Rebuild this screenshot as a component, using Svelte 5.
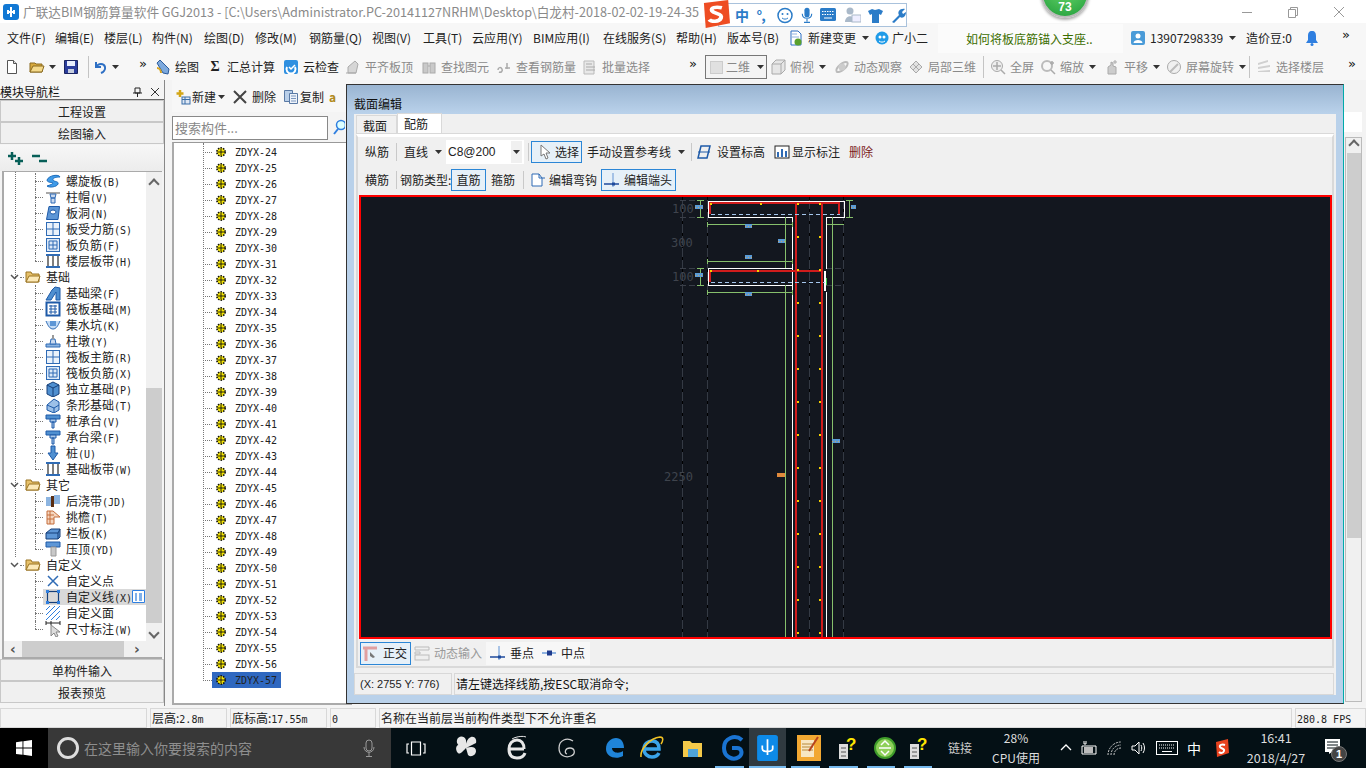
<script>
const ic = {
  new: '<path d="M3.500 1.500h6l3 3v10h-9z" fill="#fff" stroke="#555"/><path d="M9.500 1.500v3h3" fill="#ddd" stroke="#555"/>',
  open: '<path d="M1 13V4h5l1 1h6v8z" fill="#d8a93d" stroke="#8a6a20"/><path d="M1 13l3-6h11l-2 6z" fill="#f4d98a" stroke="#8a6a20"/>',
  save: '<path d="M1.500 1.500h13v13h-13z" fill="#2b3d9c" stroke="#1b2560"/><path d="M4 2h8v5H4z" fill="#e8eefc"/><path d="M5 10h6v4H5z" fill="#c7cfdf"/>',
  undo: '<path d="M4 3v5h5M4.500 8C6 4 12 4 13 8c.6 2.500-1.500 5-4 6" fill="none" stroke="#2d6fc4" stroke-width="2"/>',
  draw: '<path d="M2 4l3-3 9 9-1 5-5-1z" fill="#7da9dd" stroke="#2c5c9c"/><path d="M2 9c2 0 4 2 4 5" fill="none" stroke="#d9a520" stroke-width="2"/>',
  cloud: '<rect x="1" y="1" width="14" height="14" rx="2" fill="#2e8fe0"/><path d="M4 8a4.500 4.500 0 1 0 8 0" fill="none" stroke="#fff" stroke-width="2"/><path d="M6 8l2 2 4-4" fill="none" stroke="#fff" stroke-width="1.500"/>',
  g1: '<path d="M3 14V8l7-6 3 3-2 9z" fill="#d6d6d6" stroke="#aaa"/><path d="M1 14h10" stroke="#aaa"/>',
  bino: '<rect x="2" y="4" width="5" height="10" fill="#c9c9c9" stroke="#aaa"/><rect x="9" y="4" width="5" height="10" fill="#c9c9c9" stroke="#aaa"/><path d="M7 7h2" stroke="#aaa"/>',
  chain: '<path d="M2 11c0-3 3-3 4-1s-1 4-3 3M9 9h5M11 4v6" fill="none" stroke="#aaa" stroke-width="1.500"/>',
  list: '<path d="M2 2h10v13H2z" fill="#e8e8e8" stroke="#bbb"/><path d="M4 5h6M4 8h9M4 11h9" stroke="#aaa"/>',
  cube: '<path d="M2 5l4-4h9v10l-4 4H2z" fill="#e6e6e6" stroke="#aaa"/><path d="M2 5h9v10M11 5l4-4" fill="none" stroke="#aaa"/>',
  orbit: '<ellipse cx="8" cy="8" rx="7" ry="3" transform="rotate(-40 8 8)" fill="none" stroke="#bbb" stroke-width="2"/><circle cx="8" cy="8" r="3.500" fill="#ccc"/>',
  boxes: '<path d="M2 8l6-6 6 6-6 6z" fill="#e2e2e2" stroke="#aaa"/><path d="M5 5l6 6M11 5l-6 6" stroke="#aaa"/>',
  zoomf: '<circle cx="7" cy="7" r="5.500" fill="#eee" stroke="#aaa"/><path d="M7 3v8M3 7h8M11 11l4 4" stroke="#aaa" stroke-width="1.500"/>',
  zoom: '<circle cx="7" cy="7" r="5" fill="none" stroke="#bbb" stroke-width="2"/><path d="M11 11l4 4M12 2v4M10 4h4" stroke="#aaa" stroke-width="1.500"/>',
  pan: '<path d="M4 15V8l3-2V3l2 1v3l3 1v7z" fill="#ccc" stroke="#aaa"/><path d="M11 1v4M9 3h4" stroke="#aaa"/>',
  rot: '<circle cx="8" cy="8" r="6.500" fill="#f0f0f0" stroke="#aaa"/><path d="M4 13l8-8" stroke="#bbb" stroke-width="2"/>',
  floors: '<path d="M2 4l10-3v2L2 6zM2 8l12-2v2L2 10zM2 12l12-1v2H2z" fill="#d0d0d0"/>',
  doc: '<path d="M3 1h7l3 3v11H3z" fill="#fff" stroke="#2d6fc4"/><path d="M4 4h5M4 7h7" stroke="#8fb3e0"/><circle cx="10" cy="12" r="3.500" fill="#5aa02c"/>',
  mascot: '<circle cx="8" cy="8" r="6.500" fill="#1f9be8"/><circle cx="6" cy="7" r="1.500" fill="#fff"/><circle cx="10" cy="7" r="1.500" fill="#fff"/><path d="M5 11c2 1.500 4 1.500 6 0" fill="none" stroke="#fff"/>',
  user: '<rect x="1" y="1" width="14" height="14" rx="2" fill="#4a9bd8"/><circle cx="8" cy="6" r="2.500" fill="#fff"/><path d="M3.500 13c0-4 9-4 9 0z" fill="#fff"/>',
  bell: '<path d="M8 1c3 0 4 2 4 5v4l2 3H2l2-3V6c0-3 1-5 4-5z" fill="#2f7fe0"/><circle cx="8" cy="14.500" r="1.500" fill="#2f7fe0"/>',
  addnew: '<path d="M5 1v7M1.500 4.500h7" stroke="#d3a617" stroke-width="2.500"/><rect x="7" y="8" width="8" height="7" fill="#dfe8f5" stroke="#3a6ea8"/><path d="M7 10.500h8M10 8v7" stroke="#3a6ea8"/>',
  copy: '<path d="M1.500 1.500h8v11h-8z" fill="#b9cfe9" stroke="#5a7aa5"/><path d="M6.500 4.500h8v10h-8z" fill="#eef3fa" stroke="#5a7aa5"/><path d="M8 7h5M8 9.500h5M8 12h5" stroke="#7a96bd"/>',
  spiral: '<path d="M2 7c2-5 12-6 13-3-4 0-8 1-7 3s6 1 5 4-9 4-11 2c3-1 6-2 6-3S2 10 2 7z" fill="#3f9be8" stroke="#1e6dbc"/>',
  cap: '<path d="M1 3h14v2H1z" fill="#a8a8a8"/><path d="M5 5h6l-1 4H6zM6 9h4v5H6z" fill="#c9d9ef" stroke="#2f6bb5"/>',
  hole: '<path d="M4 1.500h10.500L13 14.500H1.500z" fill="#5d96d6" stroke="#1e5aa8"/><ellipse cx="8" cy="7" rx="3" ry="2" fill="#fff" stroke="#1e5aa8"/>',
  grid: '<rect x="1.500" y="1.500" width="13" height="13" fill="#eaf2fb" stroke="#2f6bb5"/><path d="M1.500 8h13M8 1.500v13" stroke="#2f6bb5"/>',
  grid2: '<rect x="1.500" y="1.500" width="13" height="13" fill="#dce9f8" stroke="#2f6bb5"/><path d="M4 8h8M8 4v8M4 4h8v8H4z" fill="none" stroke="#2f6bb5"/>',
  band: '<path d="M1 2h14M1 14h14" stroke="#2f6bb5" stroke-width="2"/><path d="M3 3v10M8 3v10M13 3v10" stroke="#555" stroke-width="1.500"/>',
  beam: '<path d="M1 15l6-10 3-3 5 1v12h-4V7L6 15z" fill="#4f8fd0" stroke="#1e5aa8"/>',
  raft: '<rect x="1.500" y="1.500" width="13" height="13" fill="#fff" stroke="#1e5aa8" stroke-width="2"/><path d="M4 5h8M4 8h8M4 11h8M6 4v9M10 4v9" stroke="#1e5aa8"/>',
  pit: '<path d="M1 4c2 5 4 8 7 8s5-3 7-8" fill="#c4dcf6" stroke="#2f6bb5"/><path d="M5 4h6v5H5z" fill="#5d96d6"/>',
  pier: '<path d="M1 14h14v-3H1z" fill="#8cb4e0" stroke="#2f6bb5"/><path d="M5 11l1-5h4l1 5z" fill="#c9d9ef" stroke="#2f6bb5"/><path d="M7 2h2v4H7z" fill="#999"/>',
  iso: '<path d="M8 1l6 3v9l-6 3-6-3V4z" fill="#4f8fd0" stroke="#163f78"/><path d="M2 4l6 3 6-3M8 7v9" fill="none" stroke="#163f78"/>',
  strip: '<path d="M2 8l7-6 5 3v8l-5 3-7-3z" fill="#9cc0e8" stroke="#1e5aa8"/><path d="M2 8l7 3v5M9 11l5-3" fill="none" stroke="#1e5aa8"/>',
  pile: '<path d="M1 2h14v4H1z" fill="#4f8fd0" stroke="#1e5aa8"/><path d="M5 6h6v3H5zM7 9h2v6H7z" fill="#aac8ea" stroke="#1e5aa8"/>',
  arrow: '<path d="M6 1h4v7h3l-5 7-5-7h3z" fill="#4f8fd0" stroke="#1e5aa8"/>',
  pour: '<rect x="1" y="4" width="6" height="9" fill="#8cb4e0"/><rect x="6" y="3" width="3" height="11" fill="#5a2e12"/><rect x="9" y="2" width="6" height="9" fill="#8cb4e0"/>',
  eave: '<path d="M2 2h6l7 6H9v7H2z" fill="#f5d6bf" stroke="#c46c3a"/><path d="M2 6h7M2 10h7M5 2v13" stroke="#c46c3a"/>',
  rail: '<path d="M1 8l5-4h9v8l-2 2H1z" fill="#5d96d6" stroke="#163f78"/><path d="M1 8h12v6M13 8l2-4" fill="none" stroke="#163f78"/>',
  press: '<path d="M1 1h14v5H1z" fill="#5d96d6" stroke="#1e5aa8"/><path d="M6 6h5v9H6z" fill="#c8c8c8" stroke="#999"/>',
  xpt: '<path d="M3 3l10 10M13 3L3 13" stroke="#2f6bb5" stroke-width="1.500"/>',
  cline: '<rect x="2.500" y="2.500" width="11" height="11" fill="none" stroke="#163f78" stroke-width="1.200"/><g fill="#2f7fe0"><rect x="1" y="1" width="3" height="3"/><rect x="12" y="1" width="3" height="3"/><rect x="1" y="12" width="3" height="3"/><rect x="12" y="12" width="3" height="3"/></g>',
  hatch: '<path d="M1 5l4-4M1 10l9-9M1 15L15 1M6 15l9-9M11 15l4-4" stroke="#2f7fe0"/>',
  dim: '<path d="M1 2h14M1 0v4M6 0v4M15 0v4" stroke="#222"/><path d="M6 4v11l3-3 2 4 2-1-2-4h4z" fill="#ddd" stroke="#888"/>',
  folder: '<path d="M1 13V3h5l1 2h7v8z" fill="#e6c06a" stroke="#9a7422"/><path d="M1 13l3-6h11l-2 6z" fill="#fce9b7" stroke="#9a7422"/>',
  gear: '<circle cx="8" cy="8" r="5.500" fill="#f6e600" stroke="#111" stroke-dasharray="2 1.500" stroke-width="2.200"/><path d="M4 8h8M8 4v8" stroke="#111" stroke-width="1.200"/>',
  select: '<path d="M4 1v11l3-2 2 5 2-1-2-5h4z" fill="#fff" stroke="#777"/>',
  elev: '<path d="M4 2h9l-3 12H1z" fill="none" stroke="#1e5aa8" stroke-width="1.500"/><path d="M1 8h12" stroke="#1e5aa8"/>',
  mark: '<rect x="1" y="2" width="14" height="12" fill="#fff" stroke="#222"/><path d="M4 13V8M8 13V5M12 13V7" stroke="#2f6bb5" stroke-width="2"/>',
  hook: '<path d="M2 2h7l3 4v8H2z" fill="#fff" stroke="#2f6bb5"/><path d="M12 6h3M9 2v4h3" fill="none" stroke="#2f6bb5"/>',
  end: '<path d="M0 12h15" stroke="#1e4a9c" stroke-width="1.500"/><path d="M9 1v14" stroke="#8fb3e0" stroke-width="1.500"/><rect x="8" y="10.500" width="3" height="3" fill="#1e4a9c"/>',
  mid: '<path d="M1 8h14" stroke="#8fb3e0" stroke-width="2"/><rect x="6" y="5.500" width="5" height="5" fill="#1e3a8c"/>',
  ortho: '<path d="M1 3h14M4 3v13" stroke="#e0a0a0" stroke-width="3"/><path d="M8 7l5 5-2 1-3-2z" fill="#777"/>',
  dyn: '<path d="M1 2h14v3H1zM1 7h5v2H1z" fill="none" stroke="#bbb"/><rect x="1" y="10" width="14" height="5" fill="#eee" stroke="#bbb"/>'
};
const menu = [['文件(F)',48],['编辑(E)',49],['楼层(L)',48],['构件(N)',52],['绘图(D)',51],['修改(M)',54],['钢筋量(Q)',63],['视图(V)',51],['工具(T)',49],['云应用(Y)',61],['BIM应用(I)',70],['在线服务(S)',73],['帮助(H)',51],['版本号(B)',60]];
const tb1 = [
  {i:'new',w:25},{i:'open',w:18},{a:1,w:16},{i:'save',w:22},{s:1,w:7},{i:'undo',w:18},{a:1,w:29},{m:1,w:16},
  {i:'draw',t:'绘图',w:52},{sig:1,t:'汇总计算',w:76},{i:'cloud',t:'云检查',w:62},{i:'g1',t:'平齐板顶',w:76,g:1},{i:'bino',t:'查找图元',w:75,g:1},{i:'chain',t:'查看钢筋量',w:86,g:1},{i:'list',t:'批量选择',w:107,g:1},{m:1,w:16}
];
const tb2 = [
  {i:'cube',t:'俯视',w:64,g:1,ar:1},{i:'orbit',t:'动态观察',w:74,g:1},{i:'boxes',t:'局部三维',w:72,g:1},{s:1,w:10},
  {i:'zoomf',t:'全屏',w:50,g:1},{i:'zoom',t:'缩放',w:64,g:1,ar:1},{i:'pan',t:'平移',w:62,g:1,ar:1},{i:'rot',t:'屏幕旋转',w:80,g:1,ar:1},{s:1,w:10},{i:'floors',t:'选择楼层',w:92,g:1},{m:1,w:16}
];
const tree = [
  ['spiral','螺旋板','(B)'],['cap','柱帽','(V)'],['hole','板洞','(N)'],['grid','板受力筋','(S)'],['grid2','板负筋','(F)'],['band','楼层板带','(H)',0,2],
  ['folder','基础','',1],['beam','基础梁','(F)'],['raft','筏板基础','(M)'],['pit','集水坑','(K)'],['pier','柱墩','(Y)'],['grid','筏板主筋','(R)'],['grid2','筏板负筋','(X)'],['iso','独立基础','(P)'],['strip','条形基础','(T)'],['pile','桩承台','(V)'],['pile','承台梁','(F)'],['arrow','桩','(U)'],['band','基础板带','(W)',0,2],
  ['folder','其它','',1],['pour','后浇带','(JD)'],['eave','挑檐','(T)'],['rail','栏板','(K)'],['press','压顶','(YD)',0,2],
  ['folder','自定义','',1],['xpt','自定义点',''],['cline','自定义线','(X)',0,3],['hatch','自定义面',''],['dim','尺寸标注','(W)',0,2]
];
const list = Array.from({length:34},(_,i)=>'ZDYX-'+(i+24));
const marks = [];
for(let y=204;y<=633;y+=33){marks.push([797,y]);marks.push([819,y]);}
const marks2 = [[710,204],[760,204],[710,271],[757,271]];
const blues = [[695,207,8],[851,207,5],[778,241,7],[745,257,7],[745,226,7],[695,275,8],[745,294,7],[832,441,8]];
</script>

{#snippet icon(name, size = 16)}
  <svg class="ic" width={size} height={size} viewBox="0 0 16 16">{@html ic[name]}</svg>
{/snippet}

{#snippet caret()}
  <svg class="caret" width="7" height="4" viewBox="0 0 7 4"><path d="M0 0h7L3.500 4z" fill="#333"/></svg>
{/snippet}

{#snippet toolbar(items)}
  {#each items as it}
    <span class="cell" class:gray={it.g} style:width="{it.w}px">
      {#if it.s}<span class="sep"></span>
      {:else if it.a}<span class="capwrap">{@render caret()}</span>
      {:else if it.m}<span class="more">»</span>
      {:else if it.sig}<b class="sigma">Σ</b><span class="lab">{it.t}</span>
      {:else}
        {@render icon(it.i)}
        {#if it.t}<span class="lab">{it.t}</span>{/if}
        {#if it.ar}<span class="arr">{@render caret()}</span>{/if}
      {/if}
    </span>
  {/each}
{/snippet}

<div class="screen">
  <header class="title">
    <svg class="appicon" width="16" height="16" viewBox="0 0 16 16"><rect width="16" height="16" rx="3" fill="#1178d4"/><path d="M8 3v10M4 8h8M5 6v4M11 6v4" fill="none" stroke="#fff" stroke-width="2"/></svg>
    <span class="titletext">广联达BIM钢筋算量软件 GGJ2013 - [C:\Users\Administrator.PC-20141127NRHM\Desktop\白龙村-2018-02-02-19-24-35</span>
    <div class="winbtns">
      <span class="wb"><svg width="12" height="12"><path d="M1 6.500h10" stroke="#999"/></svg></span>
      <span class="wb"><svg width="12" height="12"><path d="M1.500 3.500h7v8h-7zM3.500 3V1.500h7v8H9" fill="none" stroke="#999"/></svg></span>
      <span class="wb"><svg width="12" height="12"><path d="M1 1l10 10M11 1L1 11" stroke="#999"/></svg></span>
    </div>
  </header>

  <nav class="menubar">
    {#each menu as m}<span class="mi" style:width="{m[1]}px">{m[0]}</span>{/each}
    <span class="mi wide87">{@render icon('doc')}<span class="lab2">新建变更</span><span class="arr2">{@render caret()}</span></span>
    <span class="mi wide64">{@render icon('mascot')}<span class="lab1">广小二</span></span>
    <span class="notice">如何将板底筋锚入支座..</span>
    <span class="mi acct">{@render icon('user')}<span class="lab2">13907298339</span><span class="arr3">{@render caret()}</span></span>
    <span class="mi bean">造价豆:0</span>
    <span class="mi bellc">{@render icon('bell')}</span>
    <span class="more">»</span>
  </nav>

  <div class="toolbar">
    {@render toolbar(tb1)}
    <span class="combo"><span class="sq"></span><span class="gtxt">二维</span>{@render caret()}</span>
    <span class="cellgap"></span>
    {@render toolbar(tb2)}
  </div>

  <main class="work">
    <aside class="nav">
      <div class="navtitle"><span>模块导航栏</span><span class="navctl"><svg width="9" height="10"><path d="M2 1h5v5H2zM0 6h9M4.500 6v4" fill="none" stroke="#222"/></svg><svg width="8" height="8"><path d="M0 0l8 8M8 0L0 8" stroke="#333"/></svg></span></div>
      <div class="navbtn">工程设置</div>
      <div class="navbtn">绘图输入</div>
      <div class="treetools">
        <svg width="17" height="15" viewBox="0 0 17 15"><path d="M5 1v8M1 5h8M12 6v8M8 10h8" stroke="#075f58" stroke-width="2.500"/></svg>
        <svg width="17" height="15" viewBox="0 0 17 15"><path d="M1 5h8M8 10h8" stroke="#075f58" stroke-width="2.500"/></svg>
      </div>
      <div class="treebox">
        <div class="treeview">
          <div class="guide g1"></div>
          {#each tree as t}
            <div class="node" class:cat={t[3]} class:sel={t[4]===3}>
              {#if t[3]}
                <svg class="chev" width="9" height="6"><path d="M1 1l3.500 3.500L8 1" fill="none" stroke="#555" stroke-width="1.500"/></svg><span class="dots"></span>
              {:else}
                <span class="stem" class:last={t[4]===2}></span>
              {/if}
              {@render icon(t[0])}
              <span class="nlabel">{t[1]}<span class="mono">{t[2]}</span></span>
              {#if t[4]===3}<span class="colbtn"><svg width="13" height="13" viewBox="0 0 13 13"><path d="M.500.500h12v12H.500z" fill="#fff" stroke="#2f7fe0"/><path d="M3 3h2v8H3zM7 3h3v8H7z" fill="#7fb0ea"/></svg></span>{/if}
            </div>
          {/each}
        </div>
        <div class="vbar"><span class="tip up"></span><span class="vtrack"><span class="vthumb"></span></span><span class="tip down"></span></div>
        <div class="hbar"><span class="htip">‹</span><span class="hthumb"></span><span class="htip">›</span></div>
      </div>
      <div class="navbtn">单构件输入</div>
      <div class="navbtn">报表预览</div>
    </aside>

    <section class="listpanel">
      <div class="ltools">
        {@render icon('addnew')}<span class="ll">新建</span>{@render caret()}
        <svg class="xmark" width="14" height="14" viewBox="0 0 14 14"><path d="M1 1l12 12M13 1L1 13" stroke="#444" stroke-width="2"/></svg><span class="ll2">删除</span>
        <span class="cpy">{@render icon('copy')}</span><span class="ll">复制</span>
        <span class="peek">a</span>
      </div>
      <div class="searchrow"><span class="search">搜索构件...</span>
        <svg class="mag" width="12" height="16" viewBox="0 0 12 16"><circle cx="8" cy="6" r="4.500" fill="#dff" stroke="#2f7fe0" stroke-width="1.500"/><path d="M5 10l-4 5" stroke="#2f7fe0" stroke-width="2"/></svg>
      </div>
      <div class="listbox">
        <div class="guide g2"></div>
        {#each list as name, i}
          <div class="lrow"><span class="stem2"></span><span class="lsel" class:active={i===33}>{@render icon('gear',12)}<span class="lname">{name}</span></span></div>
        {/each}
      </div>
    </section>

    <aside class="rightcol">
      <div class="rwhite"></div>
      <div class="rbar"><span class="tip up"></span><span class="rthumb"></span></div>
    </aside>

    <div class="dialog">
      <div class="dtitle">截面编辑</div>
      <div class="dbody">
        <div class="tabs"><span class="tab">截面</span><span class="tab on">配筋</span></div>
        <div class="tabpanel">
          <div class="row r1">
            <span class="rl w38">纵筋</span><span class="vsep"></span>
            <span class="rl pl9">直线</span><span class="c1">{@render caret()}</span>
            <span class="rate">C8@200<span class="ratearrow">{@render caret()}</span></span><span class="vsep m5"></span>
            <span class="btn on w51">{@render icon('select')}<span class="bt">选择</span></span>
            <span class="rl wm">手动设置参考线</span><span class="c2">{@render caret()}</span><span class="vsep m6"></span>
            {@render icon('elev')}<span class="rl w4">设置标高</span>
            {@render icon('mark')}<span class="rl w4b">显示标注</span>
            <span class="del">删除</span>
          </div>
          <div class="row r2">
            <span class="rl w38">横筋</span><span class="vsep"></span>
            <span class="rl tp">钢筋类型:</span>
            <span class="btn on w34">直筋</span>
            <span class="rl ml5">箍筋</span><span class="vsep m7"></span>
            {@render icon('hook')}<span class="rl ml4">编辑弯钩</span>
            <span class="btn on w75">{@render icon('end')}<span class="bt2">编辑端头</span></span>
          </div>
          <div class="canvas">
            <svg width="969" height="440" viewBox="361 197 969 440" shape-rendering="crispEdges">
              <g stroke="#343a44" stroke-width="1">
                <path d="M682.500 197V637M707.500 197V637M809.500 197V637M843.500 197V637"/>
              </g>
              <g stroke="#000" stroke-width="1" stroke-dasharray="3 9">
                <path d="M682.500 197V637M707.500 197V637M809.500 197V637M843.500 197V637"/>
              </g>
              <g stroke="#3a3f49" stroke-dasharray="6 3"><path d="M680 200.500H707M680 217.500H707M680 268.500H707M680 285.500H707M826 268.500H844M826 285.500H844"/></g>
              <g fill="none" stroke="#fff" stroke-width="1">
                <path d="M792.500 637V268.500H708V285.500H792.500M792.500 268.500V217.500H708V201H844V217.500H826.500V269M826.500 292V637"/>
                <path d="M825 271V291" stroke-width="2"/>
              </g>
              <g fill="none" stroke="#86c06c" stroke-width="1">
                <path d="M707 224.500H793M827 224.500H844M707 261.500H793M707 292.500H793"/>
                <path d="M785.500 217V268M785.500 285V637M832.500 217V637"/>
                <path d="M700.500 200V217M849.500 200V217M700.500 268V285"/>
                <path d="M697 200h7M697 217h7M846 200h7M846 217h7M697 268h7M697 285h7"/>
                <path d="M707.500 222v5M792.500 222v5M707.500 259v5M792.500 259v5M707.500 290v5M792.500 290v5"/>
              </g>
              <g fill="none" stroke="#d01c1c" stroke-width="2">
                <path d="M710 214V203H839V214"/>
                <path d="M710 282V271H822"/>
                <path d="M796 203V637M822 203V637"/>
              </g>
              <g fill="none" stroke="#a5c6ec" stroke-dasharray="4 3"><path d="M711 214.500H840M711 282.500H825"/></g>
              <path d="M826 278v7" stroke="#3fd04a"/>
              {#each marks as m}<rect x={m[0]} y={m[1]-1} width="2" height="2" fill="#f4d000"/>{/each}
              {#each marks2 as m}<rect x={m[0]} y={m[1]-1} width="2" height="2" fill="#f4d000"/>{/each}
              {#each blues as b}
                <rect x={b[0]} y={b[1]-2} width={b[2]} height="4" fill="#5b9bd5"/>
                <path d="M{b[0]} {b[1]+.5}h{b[2]}" stroke="#c9a36a" stroke-dasharray="1 2"/>
              {/each}
              <rect x="777" y="473" width="8" height="4" fill="#e08a3c"/>
              <g class="dimtxt" fill="#3f444d" shape-rendering="auto">
                <text x="672" y="213">100</text><text x="671" y="247">300</text><text x="672" y="281">100</text><text x="664" y="481">2250</text>
              </g>
            </svg>
          </div>
          <div class="row r3">
            <span class="btn on w51b">{@render icon('ortho')}<span class="bt5">正交</span></span>
            <span class="rl gray ml3">{@render icon('dyn')}<span class="bt4">动态输入</span></span>
            <span class="grp">{@render icon('end')}<span class="bt4">垂点</span><span class="gap7"></span>{@render icon('mid')}<span class="bt4">中点</span></span>
          </div>
        </div>
        <div class="dstatus">
          <span class="coord">(X: 2755 Y: 776)</span>
          <span class="msg">请左键选择线筋,按ESC取消命令;</span>
        </div>
      </div>
    </div>
  </main>

  <div class="statusbar">
    <span class="sc s1"></span>
    <span class="sc s2">层高:<span class="mono">2.8m</span></span>
    <span class="sc s3">底标高:<span class="mono">17.55m</span></span>
    <span class="sc s4"><span class="mono">0</span></span>
    <span class="sc s5">名称在当前层当前构件类型下不允许重名</span>
    <span class="sc s6"><span class="mono">280.8 FPS</span></span>
  </div>

  <footer class="taskbar">
    <span class="start"><svg width="16" height="16" viewBox="0 0 16 16"><path d="M0 2.200l6.500-.9v6.300H0zM7.400 1.200L16 0v7.600H7.400zM0 8.500h6.500v6.300L0 14zM7.400 8.500H16V16l-8.600-1.200z" fill="#fff"/></svg></span>
    <span class="tsearch">
      <span class="ring"></span><span class="stext">在这里输入你要搜索的内容</span>
      <svg class="micic" width="12" height="19" viewBox="0 0 12 19"><rect x="3" y="1" width="6" height="11" rx="3" fill="none" stroke="#999"/><path d="M1 8c0 7 10 7 10 0M6 13v4M3 17.500h6" fill="none" stroke="#999"/></svg>
    </span>
    <span class="tapps">
      <span class="ti w50"><svg width="20" height="15" viewBox="0 0 20 15"><path d="M5.500 1h9v13h-9zM3 3H1v9h2M17 3h2v9h-2" fill="none" stroke="#fff" stroke-width="1.200"/></svg></span>
      <span class="ti w50"><svg width="22" height="26" viewBox="0 0 22 26"><path d="M11 13C4 12 1 9 2 5s7-5 9 0zM11 13c6-2 10-1 10 3s-5 7-8 4zM11 13c-3 3-6 7-8 5S0 12 3 10zM11 13c-1-3 1-10 5-11s6 3 5 6z" fill="#e7e7e7"/></svg></span>
      <span class="ti w52"><svg width="22" height="26" viewBox="0 0 22 26"><path d="M2 14h16M18 14c0-6-3-9-7-9S3 8 3 14s3 9 8 9 7-2 8-5" fill="none" stroke="#e7e7e7" stroke-width="3"/><path d="M6 4c5-3 12-3 14-2" fill="none" stroke="#e7e7e7"/></svg></span>
      <span class="ti w48"><svg width="20" height="22" viewBox="0 0 20 22"><path d="M16 4C10 0 2 3 2 11s7 10 12 8 4-8-1-8-6 5-3 6" fill="none" stroke="#cfcfcf" stroke-width="1.300"/></svg></span>
      <span class="ti w48"><svg width="20" height="22" viewBox="0 0 20 22"><path d="M1 12C1 5 6 1 11 1c5 0 8 4 8 10H7c0 5 7 6 11 3v5c-7 4-17 1-17-7z" fill="#1f84d8"/></svg></span>
      <span class="ti w26"><svg width="24" height="26" viewBox="0 0 24 26"><path d="M3 14h16c0-6-3-8-7-8s-8 3-8 8 4 8 8 8 6-2 7-4" fill="none" stroke="#3aa3e8" stroke-width="3.500"/><path d="M1 22C0 14 10 3 20 2c4 0 3 4 1 7" fill="none" stroke="#f2c224" stroke-width="1.500"/></svg></span>
      <span class="ti w36 ml10"><svg width="20" height="18" viewBox="0 0 20 18"><path d="M0 2h7l2 2h10v14H0z" fill="#f4c94a"/><path d="M5 10h10v8H5z" fill="#4fa3d8"/></svg></span>
      <span class="ti w38"><svg width="23" height="26" viewBox="0 0 23 26"><path d="M20 5C13-1 2 3 2 13c0 9 9 13 15 9 4-3 3-9-2-9H10" fill="none" stroke="#1a74d2" stroke-width="4"/></svg></span>
      <span class="ti w37 act"><svg width="23" height="26" viewBox="0 0 24 30"><rect width="24" height="30" rx="3" fill="#0d8ae8"/><path d="M12 5v18M6 12v4c0 3 3 3 6 3s6 0 6-3v-4" fill="none" stroke="#fff" stroke-width="2"/></svg></span>
      <span class="ti w38"><svg width="24" height="26" viewBox="0 0 24 26"><rect x="0" y="0" width="24" height="26" fill="#f2a832"/><rect x="4" y="5" width="13" height="17" fill="#f7e7c4"/><path d="M5 9h11M5 12h11M5 15h11" stroke="#b78a3a"/><path d="M21 2L12 16" stroke="#b6431e" stroke-width="2"/></svg></span>
      <span class="ti w38"><svg width="20" height="26" viewBox="0 0 20 26"><rect x="2" y="9" width="9" height="15" fill="#ddd"/><path d="M4 13h5M4 17h5M4 21h5" stroke="#555"/><text x="9" y="15" class="q">?</text></svg></span>
      <span class="ti w38"><svg width="22" height="28" viewBox="0 0 22 28"><circle cx="11" cy="14" r="10" fill="#8fd05a" stroke="#3f9c2a" stroke-width="2"/><path d="M5 14h12M7 11l4-4 4 4M7 17l4 4 4-4" fill="none" stroke="#fff" stroke-width="1.500"/></svg></span>
      <span class="ti w36"><svg width="20" height="26" viewBox="0 0 20 26"><rect x="2" y="9" width="9" height="15" fill="#ddd"/><path d="M4 13h5M4 17h5M4 21h5" stroke="#555"/><text x="9" y="15" class="q">?</text></svg></span>
    </span>
    <span class="tlink">链接</span>
    <span class="tcpu"><span>28%</span><span>CPU使用</span></span>
    <span class="ttray">
      <svg width="12" height="12" viewBox="0 0 12 12"><path d="M1 8l5-5 5 5" fill="none" stroke="#fff" stroke-width="1.300"/></svg>
      <svg width="16" height="14" viewBox="0 0 16 14"><path d="M3 3h2M3 0v3M5 0v3M1 5h14v8H1z" fill="none" stroke="#fff"/><rect x="3" y="6" width="9" height="6" fill="#bbb"/></svg>
      <svg width="16" height="16" viewBox="0 0 16 16"><path d="M2 15a13 13 0 0 1 13-13M5 15a10 10 0 0 1 10-10M8 15a7 7 0 0 1 7-7" fill="none" stroke="#ccc" stroke-dasharray="2 1"/></svg>
      <svg width="16" height="16" viewBox="0 0 16 16"><path d="M1 6h3l4-4v12l-4-4H1zM10 5c1 2 1 4 0 6M12 3c2 3 2 7 0 10" fill="none" stroke="#fff"/></svg>
      <svg width="22" height="14" viewBox="0 0 22 14"><rect x=".5" y=".5" width="21" height="13" fill="none" stroke="#fff"/><path d="M3 4h16M3 7h16" stroke="#fff" stroke-dasharray="1 1"/><path d="M6 10.500h10" stroke="#fff"/></svg>
      <span class="zh">中</span>
      <svg class="traysg" width="16" height="18" viewBox="0 0 14 18"><path d="M1 3l12-3 1 14-12 4z" fill="#e8421e"/><path d="M10 6C7 5 4 6 5 8s5 1 4 4-4 2-5 1" fill="none" stroke="#fff" stroke-width="2"/></svg>
    </span>
    <span class="clock"><span>16:41</span><span>2018/4/27</span></span>
    <span class="notif"><svg width="15" height="15" viewBox="0 0 15 15"><path d="M0 0h15v13H7l-3 2v-2H0z" fill="#fff"/><path d="M2 3h11M2 6h11M2 9h11" stroke="#041015"/></svg><span class="badge">1</span></span>
    {#each [[715,29],[749,37],[791,29],[829,29],[867,28],[904,28]] as b}
      <span class="runbar" style:left="{b[0]}px" style:width="{b[1]}px"></span>
    {/each}
  </footer>

  <div class="ball"><span>73</span></div>
  <div class="sogou">
    <svg class="slogo" width="27" height="28" viewBox="0 0 30 36" preserveAspectRatio="none"><path d="M1 4l27-4 2 30-27 6z" fill="#ee4d23"/><path d="M21 10C14 8 8 10 10 14s12 3 10 9-11 5-13 2" fill="none" stroke="#fff" stroke-width="4.500"/></svg>
    <div class="sbar">
      <span class="szh">中</span>
      <span class="spunct">°,</span>
      <svg width="16" height="17" viewBox="0 0 16 17"><circle cx="8" cy="8.500" r="7" fill="none" stroke="#2b7cc8" stroke-width="1.500"/><circle cx="5.500" cy="7" r="1" fill="#2b7cc8"/><circle cx="10.500" cy="7" r="1" fill="#2b7cc8"/><path d="M5 11c2 1.500 4 1.500 6 0" fill="none" stroke="#2b7cc8"/></svg>
      <svg width="12" height="17" viewBox="0 0 14 18"><rect x="4" y="0" width="6" height="11" rx="3" fill="#2b7cc8"/><path d="M1.500 7c0 7 11 7 11 0M7 13v3M3.500 17h7" fill="none" stroke="#2b7cc8" stroke-width="1.300"/></svg>
      <svg width="16" height="14" viewBox="0 0 16 14"><rect width="16" height="13" rx="1.500" fill="#2b7cc8"/><path d="M2 3.500h12M2 6.500h12" stroke="#fff" stroke-dasharray="1.500 1"/><path d="M4 10h8" stroke="#fff"/></svg>
      <svg width="17" height="16" viewBox="0 0 17 16"><circle cx="6" cy="4" r="3.500" fill="#aab9c9"/><path d="M1 15c0-7 9-7 9-3v3z" fill="#aab9c9"/><rect x="8" y="8" width="9" height="7" fill="#eef" stroke="#aab9c9"/></svg>
      <svg width="15" height="15" viewBox="0 0 15 15"><path d="M0 3l4-2 3 1 4-1 4 2-2 4-2-1v9H4V6L2 7z" fill="#2b7cc8"/></svg>
      <svg width="15" height="15" viewBox="0 0 15 15"><path d="M1 14l7-7c-2-3 1-7 6-6l-3 3 1 2 3-2c0 4-3 7-6 5l-6 6z" fill="#2b7cc8"/></svg>
    </div>
  </div>
</div>

<style>
:global(body){margin:0;background:#f0f0f0;overflow:hidden}
.screen{position:relative;width:1366px;height:768px;overflow:hidden;display:flex;flex-direction:column;font:12px/16px "Noto Sans CJK SC","Noto Sans",sans-serif;color:#1a1a1a;background:#f0f0f0}
.ic{flex:none;display:block}
.title{height:23px;flex:none;background:#fff;display:flex;align-items:center;padding-left:3px;color:#8a8a8a}
.appicon{margin-right:4px}
.titletext{white-space:nowrap;font-size:12.650px;margin-top:1px;flex:none}
.winbtns{margin-left:auto;display:flex;margin-right:4px}
.wb{width:46px;height:20px;display:flex;align-items:center;justify-content:center}
.menubar{height:30px;flex:none;background:#f7f7f7;display:flex;align-items:center;padding-left:7px;white-space:nowrap;box-sizing:border-box}
.mi{display:inline-flex;align-items:center;flex:none;height:20px;color:#222}
.wide87{width:87px;padding-left:1px;box-sizing:border-box}
.wide64{width:64px}
.lab2{margin-left:4px}.lab1{margin-left:2px}
.arr2{margin-left:6px;display:inline-flex}
.arr3{margin-left:6px;display:inline-flex}
.notice{width:185px;box-sizing:border-box;padding-left:28px;color:#3c6e00;flex:none;height:29px;line-height:29px;background:#fbfbfb;margin-right:7px}
.acct{width:116px}
.bean{width:58px}
.bellc{width:38px}
.more{font-size:13px;line-height:13px;color:#111;font-family:"DejaVu Sans",sans-serif;margin-top:-8px;display:block}
.toolbar{height:27px;flex:none;background:#f7f7f7;display:flex;align-items:center;padding:1px 0 0 4px;white-space:nowrap;box-sizing:border-box}
.cell{display:flex;align-items:center;flex:none;height:24px;color:#222}
.cell.gray{color:#8a8a8a}
.lab{margin-left:4px}
.sigma{width:16px;text-align:center;font:bold 14px "Liberation Serif",serif}
.arr{margin-left:5px;display:inline-flex}
.capwrap{display:flex;padding-left:2px}
.sep{display:block;width:1px;height:22px;background:#c4c4c4;margin:0 3px}
.combo{flex:none;width:62px;height:24px;box-sizing:border-box;border:1px solid #777;display:flex;align-items:center;gap:3px;padding-left:4px;background:#f4f4f4;color:#888}
.combo :global(.caret){margin-left:4px}
.gtxt{color:#888}
.sq{width:13px;height:13px;background:#e0e0e0;border:1px solid #ccc;box-sizing:border-box}
.cellgap{width:3px;flex:none}
.work{flex:1;min-height:0;position:relative;display:flex;background:#f4f4f4}
.nav{width:165px;flex:none;display:flex;flex-direction:column;box-sizing:border-box;padding-top:4px;border-right:1px solid #888}
.navtitle{height:15px;display:flex;justify-content:space-between;align-items:center;border-bottom:1px solid #666;padding-right:5px;color:#111;line-height:15px}
.navctl{display:flex;gap:9px;align-items:center}
.navbtn{height:22px;line-height:22px;text-align:center;background:#f0f0f0;border:1px solid #c8c8c8;box-sizing:border-box;color:#222;flex:none}
.treetools{height:26px;flex:none;display:flex;gap:7px;align-items:center;padding-left:7px;background:linear-gradient(#f7f7f7,#ececec);margin-top:1px}
.treebox{height:488px;flex:none;box-sizing:border-box;border:2px solid #aaa;border-top-width:1px;margin:0 2px;position:relative;display:grid;grid-template-columns:142px 16px;grid-template-rows:1fr 16px;background:#fff}
.treeview{overflow:hidden;padding-top:1px;position:relative}
.guide{position:absolute;border-left:1px dotted #777}
.g1{left:11px;top:0;height:385px}
.node{height:16px;display:flex;align-items:center;white-space:nowrap;padding-left:31px;position:relative;flex:none}
.node.cat{padding-left:6px}
.node.sel{background:linear-gradient(90deg,transparent 39px,#d9d9d9 39px)}
.stem{display:block;width:8px;height:16px;margin-right:2px;flex:none;position:relative}
.stem::before{content:"";position:absolute;left:0;top:0;bottom:0;border-left:1px dotted #777}
.stem::after{content:"";position:absolute;left:0;right:0;top:8px;border-top:1px dotted #777}
.stem.last::before{bottom:8px}
.chev{flex:none}
.dots{display:block;width:4px;border-top:1px dotted #777;margin:0 1px;flex:none}
.nlabel{margin-left:5px;color:#222}
.mono{font:10px "DejaVu Sans Mono",monospace}
.colbtn{position:absolute;left:128px;top:1px;background:#fff;line-height:0}
.vbar{background:#f0f0f0;display:flex;flex-direction:column;align-items:center;padding-top:4px;box-sizing:border-box}
.tip{display:block;flex:none;width:8px;height:8px;box-sizing:border-box;border-left:2px solid #666;border-top:2px solid #666;transform:rotate(45deg)}
.tip.up{margin:4px 0 0}
.tip.down{transform:rotate(225deg);margin:0 0 4px}
.vtrack{flex:1;width:100%;display:flex;flex-direction:column;justify-content:flex-end;padding-bottom:6px;box-sizing:border-box}
.vthumb{display:block;height:235px;background:#cdcdcd}
.hbar{grid-column:1/3;background:#f0f0f0;display:flex;align-items:center;font:bold 14px "DejaVu Sans",sans-serif;color:#555}
.htip{width:18px;text-align:center;flex:none}
.hthumb{width:102px;height:16px;background:#cdcdcd}
.hbar .htip:last-child{margin-left:4px}
.listpanel{width:180px;flex:none;margin-left:7px;display:flex;flex-direction:column}
.ltools{height:32px;flex:none;display:flex;align-items:center;padding-left:3px;padding-top:2px;box-sizing:border-box;background:#f7f7f7;white-space:nowrap;color:#222;overflow:hidden}
.ltools :global(.caret){flex:none;margin:0 0 0 2px}
.ll{margin-left:1px}
.xmark{flex:none;margin-left:8px}
.ll2{margin-left:5px}
.cpy{margin-left:7px;display:inline-flex}
.peek{margin-left:5px;color:#b08a20;font-weight:700}
.searchrow{height:30px;flex:none;display:flex;align-items:center;gap:5px;overflow:hidden}
.search{width:156px;height:24px;box-sizing:border-box;border:1px solid #888;background:#fff;color:#888;padding:2px 2px;line-height:18px;font-size:13px;margin-top:1px;flex:none}
.mag{flex:none}
.listbox{flex:1;background:#fff;border:2px solid #aaa;border-right:none;border-top:1px solid #999;padding-top:1px;position:relative;overflow:hidden;margin-bottom:1px;box-sizing:border-box;white-space:nowrap}
.g2{left:29px;top:0;height:538px}
.lrow{height:16px;display:flex;align-items:center;position:relative}
.stem2{display:block;width:9px;margin-left:29px;border-top:1px dotted #777;flex:none}
.lsel{display:flex;align-items:center;height:16px;width:69px;padding-left:3px;box-sizing:border-box;flex:none}
.lsel.active{background:#2f68c0}
.lname{font:10px "DejaVu Sans Mono",monospace;margin-left:8px;color:#222}
.rightcol{position:absolute;right:0;top:0;bottom:0;width:22px;background:#f3f3f3}
.rwhite{height:20px;width:18px;margin-top:32px;background:#fff}
.rbar{margin-top:5px;width:17px;display:flex;flex-direction:column;align-items:center;background:#f0f0f0;height:565px;margin-left:1px;box-shadow:inset 0 0 0 1px #bbb}
.rthumb{display:block;width:14px;height:385px;background:#cdcdcd;margin-top:4px}
.dialog{position:absolute;left:346px;top:4px;width:998px;height:620px;box-sizing:border-box;border:1px solid #333;border-right-color:#0aa;background:linear-gradient(#99b4d1 0,#b9d1ea 28px,#b9d1ea);display:flex;flex-direction:column;padding:0 7px 8px 7px}
.dtitle{height:29px;line-height:37px;color:#111;flex:none}
.dbody{flex:1;min-height:0;background:#f0f0f0;display:flex;flex-direction:column;padding:0 2px}
.tabs{height:20px;flex:none;display:flex;align-items:flex-end}
.tab{display:block;width:41px;height:19px;padding-left:6px;line-height:20px;background:#f0f0f0;border:1px solid #d9d9d9;border-bottom:none;box-sizing:border-box;color:#222}
.tab.on{width:45px;height:21px;background:#fff}
.tabpanel{flex:1;min-height:0;border:2px solid #d9d9d9;border-top:3px solid #fff;display:flex;flex-direction:column;padding:3px 0 0 0;box-sizing:border-box;box-shadow:0 -1px #d9d9d9}
.row{height:25px;flex:none;display:flex;align-items:center;white-space:nowrap;color:#222}
.r1{height:24px;margin-bottom:1px}
.r2{margin-top:3px;height:24px}
.rl{display:inline-flex;align-items:center;flex:none}
.rl.gray{color:#999}
.w38{width:39px;padding-left:7px;box-sizing:border-box}
.vsep{display:block;width:1px;height:18px;background:#c9c9c9;flex:none}
.pl9{padding-left:7px;box-sizing:border-box;width:38px}
.c1{width:11px;display:inline-flex;flex:none}
.rate{width:78px;height:24px;background:#fff;display:flex;align-items:center;padding:0 2px;box-sizing:border-box;justify-content:space-between;flex:none;font:12px "Liberation Sans",sans-serif}
.ratearrow{display:inline-flex;background:#f0f0f0;height:22px;width:11px;align-items:center;justify-content:center}
.m5{margin:0 2px 0 4px}
.btn{display:inline-flex;align-items:center;height:22px;box-sizing:border-box;border:1px solid #2b86d6;background:#e6f0f8;flex:none;justify-content:center}
.w51{width:51px;padding-left:5px;justify-content:flex-start}
.bt{margin-left:2px}
.wm{margin-left:5px;width:91px}
.c2{width:10px;display:inline-flex;flex:none}
.m6{margin:0 5px 0 3px}
.w4{margin-left:4px;width:57px}
.w4b{margin-left:2px;width:57px}
.del{color:#7a1a1a;flex:none}
.tp{margin-left:3px;width:51px;color:#222}
.w34{width:35px}
.ml5{margin-left:5px}
.m7{margin:0 6px 0 8px}
.ml4{margin-left:3px}
.w75{width:75px;margin-left:4px;justify-content:flex-start;padding-left:2px}
.bt2{margin-left:4px}
.canvas{flex:none;width:973px;height:444px;box-sizing:border-box;border:2px solid #f00;background:#13171f;margin:3px 0 0 1px;overflow:hidden;position:relative}
.canvas svg{display:block}
.dimtxt{font:12px "DejaVu Sans Mono",monospace}
.r3{margin-top:2px;height:24px;padding-left:2px}
.w51b{width:51px;height:23px;justify-content:flex-start;padding-left:1px}
.bt5{margin-left:5px}
.bt4{margin-left:4px}
.ml3{margin-left:3px;width:72px}
.grp{display:inline-flex;align-items:center;background:#f7f7f7;height:23px;flex:none;padding-left:4px;width:104px;box-sizing:border-box}
.gap7{width:7px;flex:none}
.dstatus{height:22px;flex:none;display:flex;margin:5px 0 0 -2px;gap:2px}
.coord{width:98px;box-sizing:border-box;padding-left:5px;background:#f0f0f0;border:1px solid #d8d8d8;font:11px/20px "Liberation Sans",sans-serif;color:#222;flex:none}
.msg{flex:1;box-sizing:border-box;padding-left:1px;line-height:20px;border:1px solid #d8d8d8;color:#111;background:#f0f0f0}
.statusbar{height:22px;flex:none;background:#f4f4f4;display:flex;gap:3px;padding-top:2px;box-sizing:border-box;overflow:hidden}
.sc{flex:none;box-sizing:border-box;height:20px;border:1px solid #d8d8d8;padding-left:1px;line-height:18px;color:#222;white-space:nowrap}
.s1{width:147px}.s2{width:77px}.s3{width:97px}.s4{width:46px}.s5{width:913px}.s6{width:71px}
.taskbar{height:40px;flex:none;background:#041015;display:flex;align-items:center;position:relative;color:#ddd}
.start{width:48px;height:40px;background:#000;display:flex;align-items:center;justify-content:center;flex:none}
.tsearch{width:343px;height:40px;background:#383838;display:flex;align-items:center;flex:none;padding-left:9px;box-sizing:border-box}
.ring{width:16px;height:16px;border:3px solid #ddd;border-radius:50%;flex:none}
.stext{margin-left:5px;color:#8e8e8e;font-size:14px;flex:none;width:275px;white-space:nowrap}
.micic{margin-left:4px}
.tapps{display:flex;flex:none;width:545px}
.ti{height:40px;display:flex;align-items:center;justify-content:center;flex:none;box-sizing:border-box}
.ti svg{display:block;flex:none}
.w50{width:50px}.w52{width:52px}.w48{width:48px}.w26{width:26px}.w36{width:36px}.w38{width:38px}.w37{width:37px}
.ml10{margin-left:10px}
.act{background:#303a40}
.q{font:bold 17px "Liberation Sans",sans-serif;fill:#ffe600}
.tlink{flex:none;width:48px;text-align:center;color:#ccc}
.tcpu{flex:none;width:64px;display:flex;flex-direction:column;align-items:center;font-size:12px;line-height:20px}
.ttray{display:flex;align-items:center;gap:9px;margin-left:12px;flex:none;width:181px}
.traysg{margin-left:4px}
.zh{font-size:14px;color:#fff}
.clock{display:flex;flex-direction:column;align-items:center;flex:none;width:70px;line-height:20px;font-size:12.500px;color:#ddd}
.notif{margin-left:14px;position:relative;display:block;margin-top:-2px;width:16px;height:16px}
.badge{position:absolute;left:6px;top:7px;width:16px;height:16px;border-radius:50%;background:#444;border:1px solid #777;color:#fff;font:bold 11px/15px "Liberation Sans",sans-serif;text-align:center;box-sizing:border-box}
.runbar{position:absolute;bottom:0;height:2px;background:#76b9ed}
.ball{position:absolute;left:1041px;top:-30px;width:48px;height:48px;box-sizing:border-box;border-radius:50%;border:2px solid #bbb;background:radial-gradient(circle at 50% 30%,#6fdc6f,#1f9c3a);box-shadow:0 2px 3px #0005;display:flex;align-items:flex-end;justify-content:center;color:#fff;font:bold 12px/14px "Liberation Sans",sans-serif;padding-bottom:2px}
.sogou{position:absolute;left:703px;top:0;display:flex;align-items:flex-start}
.slogo{position:relative;z-index:1;margin-right:-12px}
.sbar{width:189px;height:24px;margin-top:3px;box-sizing:border-box;border:1px solid #a9c2dc;background:#fffc;display:flex;align-items:center;gap:7.500px;padding-left:16px;color:#2b7cc8}
.szh{font-weight:700;font-size:14px}
.spunct{font-weight:700;font-size:14px;letter-spacing:-1px;width:13px}
</style>
